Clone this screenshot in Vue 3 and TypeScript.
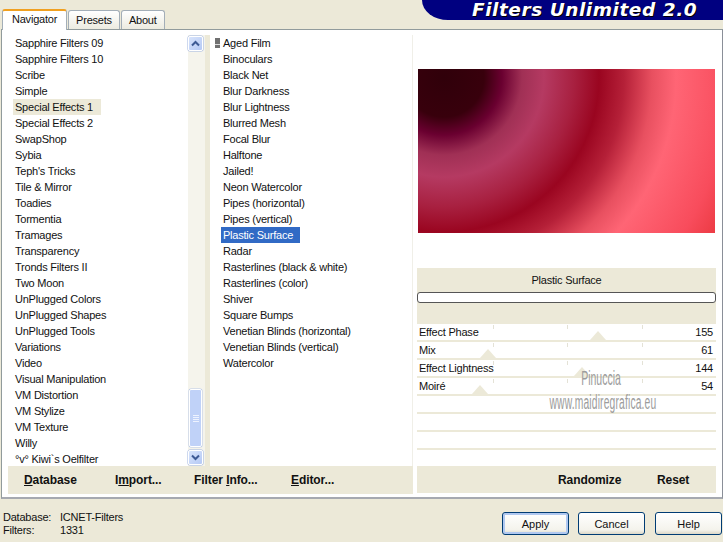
<script setup lang="ts">
const filters: string[] = ['Sapphire Filters 09','Sapphire Filters 10','Scribe','Simple','Special Effects 1','Special Effects 2','SwapShop','Sybia',"Teph's Tricks",'Tile & Mirror','Toadies','Tormentia','Tramages','Transparency','Tronds Filters II','Two Moon','UnPlugged Colors','UnPlugged Shapes','UnPlugged Tools','Variations','Video','Visual Manipulation','VM Distortion','VM Stylize','VM Texture','Willy','°v° Kiwi`s Oelfilter']
const effects: string[] = ['Aged Film','Binoculars','Black Net','Blur Darkness','Blur Lightness','Blurred Mesh','Focal Blur','Halftone','Jailed!','Neon Watercolor','Pipes (horizontal)','Pipes (vertical)','Plastic Surface','Radar','Rasterlines (black & white)','Rasterlines (color)','Shiver','Square Bumps','Venetian Blinds (horizontal)','Venetian Blinds (vertical)','Watercolor']
const params = [
  { name: 'Effect Phase', value: '155', pos: 181 },
  { name: 'Mix', value: '61', pos: 71 },
  { name: 'Effect Lightness', value: '144', pos: 165 },
  { name: 'Moiré', value: '54', pos: 63 },
  { name: '', value: '', pos: -1 },
  { name: '', value: '', pos: -1 },
  { name: '', value: '', pos: -1 },
  { name: '', value: '', pos: -1 },
]
</script>

<template>
  <div class="win">
    <header class="top">
      <div class="tabs">
        <div class="tab active">Navigator</div>
        <div class="tab">Presets</div>
        <div class="tab">About</div>
      </div>
      <div class="banner">Filters Unlimited 2.0</div>
    </header>
    <main class="panel">
      <div class="browser">
        <div class="lists">
          <ul class="list cats">
            <li v-for="f in filters" :key="f" :class="{ cur: f === 'Special Effects 1' }"><span>{{ f }}</span></li>
          </ul>
          <div class="scroll">
            <div class="sbtn">
              <svg width="9" height="7" viewBox="0 0 9 7"><path d="M1 5.5 4.5 2 8 5.5" fill="none" stroke="#3d5a94" stroke-width="2"/></svg>
            </div>
            <div class="track">
              <div class="thumb"><i></i><i></i><i></i><i></i></div>
            </div>
            <div class="sbtn">
              <svg width="9" height="7" viewBox="0 0 9 7"><path d="M1 1.5 4.5 5 8 1.5" fill="none" stroke="#3d5a94" stroke-width="2"/></svg>
            </div>
          </div>
          <div class="sep"></div>
          <ul class="list fx">
            <li v-for="(e, i) in effects" :key="e" :class="{ sel: e === 'Plastic Surface' }">
              <b v-if="i === 0" class="grip"></b><span>{{ e }}</span>
            </li>
          </ul>
        </div>
        <div class="toolbar">
          <a class="t1"><u>D</u>atabase</a>
          <a class="t2">I<u>m</u>port...</a>
          <a class="t3">Filter <u>I</u>nfo...</a>
          <a class="t4"><u>E</u>ditor...</a>
        </div>
      </div>
      <div class="side">
        <div class="preview-wrap"><div class="preview"></div></div>
        <div class="head">
          <div class="title">Plastic Surface</div>
          <div class="progress"></div>
        </div>
        <div class="rows">
          <div v-for="(p, i) in params" :key="i" class="row" :class="{ ticked: p.pos >= 0 }">
            <span>{{ p.name }}</span><span>{{ p.value }}</span>
            <em v-if="p.pos >= 0" class="tri" :style="{ left: p.pos + 'px' }"></em>
          </div>
          <div class="mark"><div class="m1">Pinuccia</div><div class="m2">www.maidiregrafica.eu</div></div>
        </div>
        <div class="toolbar right">
          <a>Randomize</a>
          <a>Reset</a>
        </div>
      </div>
    </main>
    <footer class="foot">
      <div class="info">
        <div><span class="k">Database:</span>ICNET-Filters</div>
        <div><span class="k">Filters:</span>1331</div>
      </div>
      <div class="btns">
        <button class="def">Apply</button>
        <button>Cancel</button>
        <button>Help</button>
      </div>
    </footer>
  </div>
</template>

<style>
html, body { margin: 0; background: #ece9d8; }
</style>

<style scoped>
.win { width: 723px; height: 542px; background: #ece9d8; font: 11px/16px "Liberation Sans", sans-serif; letter-spacing: -.22px; color: #111; overflow: hidden; display: flex; flex-direction: column; }
.top { height: 29px; display: flex; justify-content: space-between; align-items: flex-start; flex: none; }
.tabs { display: flex; align-items: flex-end; height: 29px; padding-left: 2px; position: relative; z-index: 1; }
.tab { height: 19px; box-sizing: border-box; line-height: 19px; padding: 0 7px; margin-right: 1px; background: linear-gradient(#fff, #ecebe0); border: 1px solid #a3aeb8; border-bottom: none; border-radius: 3px 3px 0 0; }
.tab.active { height: 21px; line-height: 17px; background: #fff; margin-bottom: -1px; border-top: 2px solid #f0a020; padding: 0 9px; }
.banner { width: 301px; height: 20px; box-sizing: border-box; background: #000080; border-radius: 0 0 0 26px / 0 0 0 20px; color: #fff; font: italic 700 18.5px/20.5px "DejaVu Sans", sans-serif; letter-spacing: .55px; padding-left: 50px; text-shadow: 1px 1px 0 #000; white-space: nowrap; }
.panel { height: 470px; flex: none; box-sizing: border-box; margin: 0 0 0 1px; width: 722px; border: 1px solid #919b9c; border-right-color: #8a8f98; border-bottom: 2px solid #a6a9b0; background: #fff; display: flex; padding: 5px 5px 4px 6px; }
.browser { width: 405px; display: flex; flex-direction: column; flex: none; }
.lists { height: 431px; display: flex; overflow: hidden; flex: none; border-right: 1px solid #f0efe8; }
.list { list-style: none; margin: 0; padding: 0; }
.list li { height: 16px; white-space: nowrap; display: flex; align-items: center; }
.cats { width: 180px; flex: none; }
.cats li { padding-left: 7px; }
.cats li.cur { padding-left: 5px; }
.cats li.cur span { display: block; background: #ece9d8; padding: 0 3px 0 2px; width: 83px; }
.scroll { width: 17px; flex: none; display: flex; flex-direction: column; background: #f5f4ec; }
.sbtn { height: 15px; flex: none; box-sizing: border-box; margin: 1px 2px 1px 0; border: 1px solid #fff; border-radius: 2px; background: linear-gradient(135deg, #d8e4fb, #b5c9f5); display: flex; align-items: center; justify-content: center; box-shadow: 0 0 0 .5px #9eb3e0; }
.track { flex: 1; position: relative; }
.thumb { position: absolute; left: 1px; right: 3px; bottom: 2px; height: 58px; border: 1px solid #fff; border-radius: 2px; box-sizing: border-box; background: #c0d2f8; box-shadow: 0 0 0 .5px #b9c8e6; display: flex; flex-direction: column; gap: 1px; align-items: center; justify-content: center; }
.thumb i { width: 6px; height: 1px; background: #eef3ff; }
.sep { width: 5px; flex: none; background: #ece9d8; }
.fx { padding-left: 11px; flex: 1; }
.fx li { position: relative; padding-left: 2px; width: 180px; }
.fx li.sel span { background: #316ac5; color: #fff; padding: 0 2px; margin-left: -2px; width: 75px; line-height: 16px; display: block; }
.grip { position: absolute; left: -6px; top: 3px; width: 5px; height: 10px; background: repeating-linear-gradient(#707070 0 3px, #ddd 3px 3.5px); }
.toolbar { height: 28px; flex: none; background: #ece9d8; display: flex; align-items: center; font: 700 12px/16px "Liberation Sans", sans-serif; letter-spacing: -.08px; position: relative; }
.toolbar a { position: absolute; white-space: nowrap; top: 6px; }
.t1 { left: 16px; }
.t2 { left: 107px; }
.t3 { left: 186px; }
.t4 { left: 283px; }
.side { width: 299px; margin-left: 4px; flex: none; display: flex; flex-direction: column; }
.preview-wrap { height: 233px; flex: none; box-sizing: border-box; padding: 34px 1px 35px 1px; }
.preview { height: 164px; background: radial-gradient(circle at 26px 8px, #30000a 0, #38000c 40px, #6a0030 58px, #a03055 78px, #b53a62 100px, #a82040 130px, #9a0520 155px, #b52038 180px, #e85060 208px, #ff6575 232px, #f84c5c 285px, #e53035 330px); }
.head { height: 56px; flex: none; background: #ece9d8; text-align: center; }
.title { line-height: 24px; }
.progress { height: 9px; border: 1px solid #555; border-radius: 3px; background: #fff; }
.rows { height: 142px; flex: none; position: relative; overflow: hidden; }
.row { height: 18px; box-sizing: border-box; display: flex; justify-content: space-between; padding: 0 3px 0 2px; position: relative; border-bottom: 2px solid #ece9d8; }
.row.ticked { background: linear-gradient(90deg, #e4e2d6 1px, transparent 1px) 76px 1px / 1px 4px no-repeat, linear-gradient(90deg, #e4e2d6 1px, transparent 1px) 150px 1px / 1px 4px no-repeat, linear-gradient(90deg, #e4e2d6 1px, transparent 1px) 225px 1px / 1px 4px no-repeat; }
.tri { position: absolute; bottom: 0; width: 0; height: 0; border: 8px solid transparent; border-top: 0; border-bottom: 9px solid #ece9d8; margin-left: -8px; }
.mark { position: absolute; left: 134px; width: 100px; top: 44px; text-align: center; color: #9c9c9c; pointer-events: none; letter-spacing: 0; }
.m1 { font: 21px/20px "Liberation Sans", sans-serif; transform: scaleX(.5); }
.m2 { font: 20px/22px "Liberation Sans", sans-serif; transform: scaleX(.515); white-space: nowrap; margin: 3px -50px 0; letter-spacing: .3px; }
.right { height: 27px; }
.right a:first-child { left: 141px; }
.right a:last-child { left: 240px; }
.foot { flex: 1; display: flex; justify-content: space-between; padding: 12px 1px 0 3px; line-height: 13px; }
.k { display: inline-block; width: 57px; }
.btns { display: flex; gap: 10px; padding-top: 1px; align-items: flex-start; }
button { width: 67px; height: 23px; padding: 0; background: linear-gradient(#fff, #f4f3ec 80%, #dcd8c8); border: 1px solid #003c74; border-radius: 3px; font: 11px "Liberation Sans", sans-serif; color: #111; }
button.def { box-shadow: inset 0 0 0 2px #b0c8f0; margin-right: -1px; }
</style>
